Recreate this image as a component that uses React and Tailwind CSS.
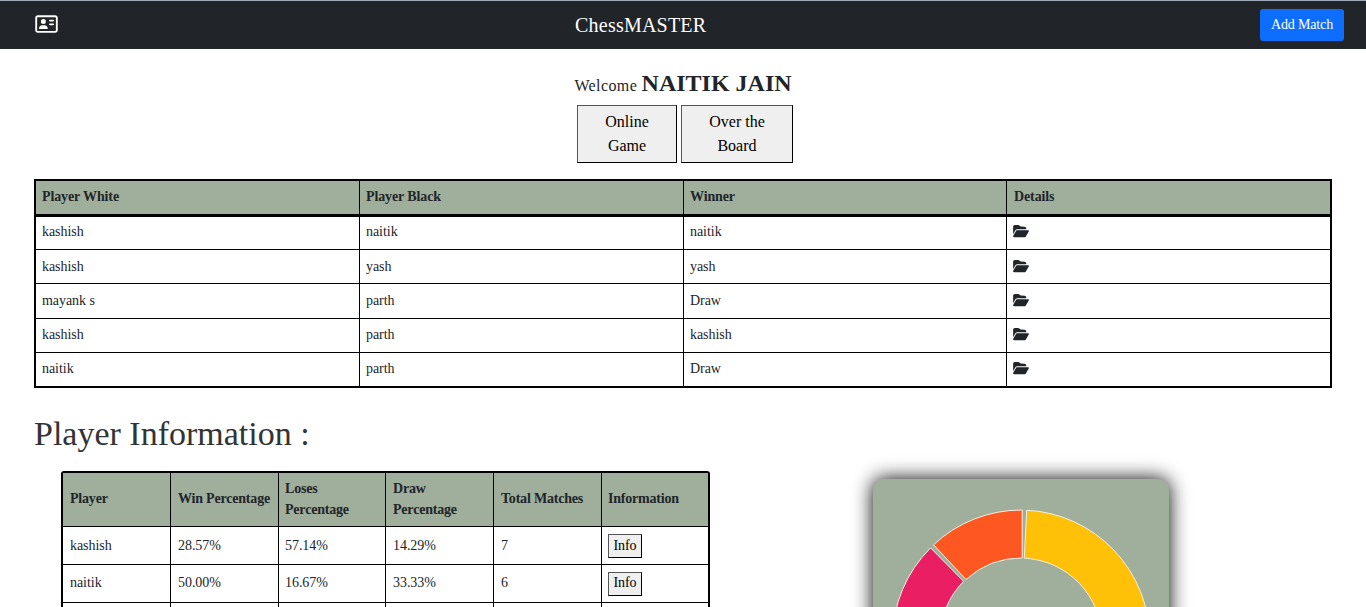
import React from "react";
import { FaFolderOpen, FaRegAddressCard } from "react-icons/fa6";

const matches = [
  ["kashish", "naitik", "naitik", "h-[33px]", "pb-[3px]"],
  ["kashish", "yash", "yash", "h-[34px]", "pb-px"],
  ["mayank s", "parth", "Draw", "h-[35px]", "pb-[2px]"],
  ["kashish", "parth", "kashish", "h-[34px]", "pb-[3px]"],
  ["naitik", "parth", "Draw", "h-[33px]", "pb-[3px]"],
];

const players = [
  ["kashish", "28.57%", "57.14%", "14.29%", "7"],
  ["naitik", "50.00%", "16.67%", "33.33%", "6"],
];

const matchGrid = "grid grid-cols-[324px_324px_323px_323px]";
const playerGrid = "grid grid-cols-[108px_108px_107px_108px_108px_106px]";

function Cell({ children, last, className = "" }) {
  return (
    <div className={`flex items-center border-black ${last ? "" : "border-r"} ${className}`}>
      {children}
    </div>
  );
}

function MatchTable() {
  return (
    <section className="mx-[34px] mt-4 border-2 border-black text-[14px] leading-[21px]">
      <div className={`${matchGrid} h-9 border-b-3 border-black bg-[#a0ae9c] font-bold tracking-[-0.12px]`}>
        {["Player White", "Player Black", "Winner", "Details"].map((h, i) => (
          <Cell key={h} last={i === 3} className={`pb-[3px] ${i === 3 ? "pl-[7px]" : "pl-1.5"}`}>{h}</Cell>
        ))}
      </div>
      {matches.map(([white, black, winner, height, pad], i) => (
        <div key={i} className={`${matchGrid} ${height} border-black tracking-[-0.05px] ${i < 4 ? "border-b" : ""}`}>
          <Cell className={`pl-1.5 ${pad}`}>{white}</Cell>
          <Cell className={`pl-1.5 ${pad}`}>{black}</Cell>
          <Cell className={`pl-1.5 ${pad}`}>{winner}</Cell>
          <Cell last className={`pl-1.5 ${pad}`}><FaFolderOpen className="mb-px h-3.5 w-4" /></Cell>
        </div>
      ))}
    </section>
  );
}

function PlayerTable() {
  return (
    <section className="ml-[61px] w-[649px] shrink-0 rounded-[3px] border-2 border-black bg-white text-[14px] leading-[21px]">
      <div className={`${playerGrid} h-[54px] border-b border-black bg-[#a0ae9c] font-bold tracking-[-0.2px]`}>
        {["Player", "Win Percentage", "Loses Percentage", "Draw Percentage", "Total Matches", "Information"].map((h, i) => (
          <Cell key={h} last={i === 5} className={`pr-1.5 pb-[2px] ${i === 2 || i === 5 ? "pl-1.5" : "pl-[7px]"}`}>{h}</Cell>
        ))}
      </div>
      {players.map((row, r) => (
        <div key={row[0]} className={`${playerGrid} h-[38px] border-b border-black tracking-[-0.05px]`}>
          {row.map((v, i) => (
            <Cell key={i} className={`${r === 1 ? "pb-[3px]" : "pb-px"} ${i === 2 ? "pl-1.5" : "pl-[7px]"}`}>{v}</Cell>
          ))}
          <Cell last className="pl-1.5">
            <button className={`h-6 w-[34px] border border-t-[#555] border-r-black border-b-black border-l-[#555] bg-[#efefef] text-black ${r === 1 ? "pb-0.5 leading-5" : "leading-5"}`}>
              Info
            </button>
          </Cell>
        </div>
      ))}
      <div className={`${playerGrid} h-[38px]`}>
        {[0, 1, 2, 3, 4, 5].map((i) => (
          <Cell key={i} last={i === 5} />
        ))}
      </div>
    </section>
  );
}

function ResultChart() {
  return (
    <div className="mt-[8px] ml-[163px] h-[320px] w-[296px] shrink-0 rounded-[10px] bg-[#a0ae9c] shadow-[0_0_20px_#000]">
      <svg width="296" height="320" viewBox="873 479 296 320" stroke="#f3efe2" strokeWidth="1">
        <path
          fill="#ffc107"
          d="M1026.7 510.2A129.3 129.3 0 0 1 1149.6 639.5H1101.9A81.5 81.5 0 0 0 1024.3 558.2Z"
        />
        <path
          fill="#ff5722"
          d="M1022.2 510V558A82 82 0 0 0 966 579.5L933.5 544.8A129 129 0 0 1 1022.2 510Z"
        />
        <path
          fill="#e91e63"
          d="M930.6 547.9A129 129 0 0 0 892.5 639.3H940A81.5 81.5 0 0 1 963.6 581.3Z"
        />
      </svg>
    </div>
  );
}

export default function App() {
  return (
    <div className="h-screen overflow-hidden bg-white font-['Liberation_Serif','Times_New_Roman',serif] text-[#212529]">
      <header className="flex h-[49px] items-center justify-between border-t border-[#9fabb8] bg-[#212529] text-white">
        <div className="w-[106px] pl-[35px] pb-0.5">
          <FaRegAddressCard className="h-5 w-[23px]" />
        </div>
        <h1 className="mr-[84px] w-[132px] text-[20px] leading-[30px] tracking-[0.22px] whitespace-nowrap">ChessMASTER</h1>
        <button className="mr-[22px] h-8 w-[84px] rounded-[3px] bg-[#0d6efd] pb-0.5 text-[14px] tracking-[-0.15px]">
          Add Match
        </button>
      </header>
      <div className="mt-4 text-center text-[16px] leading-9">
        <span className="tracking-[0.4px]">Welcome </span>
        <b className="text-[24px]">NAITIK JAIN</b>
      </div>
      <div className="mt-px flex justify-center gap-1 pl-1 text-[16px] leading-6 text-black">
        <button className="h-[58px] w-[100px] border border-t-[#555] border-r-black border-b-black border-l-[#555] bg-[#efefef] px-5">
          Online Game
        </button>
        <button className="h-[58px] w-[112px] border border-t-[#555] border-r-black border-b-black border-l-[#555] bg-[#efefef] px-5">
          Over the Board
        </button>
      </div>
      <MatchTable />
      <h2 className="mt-[25px] ml-[34px] text-[34px] leading-[42px] text-[#333]">Player Information :</h2>
      <div className="mt-[16px] flex items-start">
        <PlayerTable />
        <ResultChart />
      </div>
    </div>
  );
}
